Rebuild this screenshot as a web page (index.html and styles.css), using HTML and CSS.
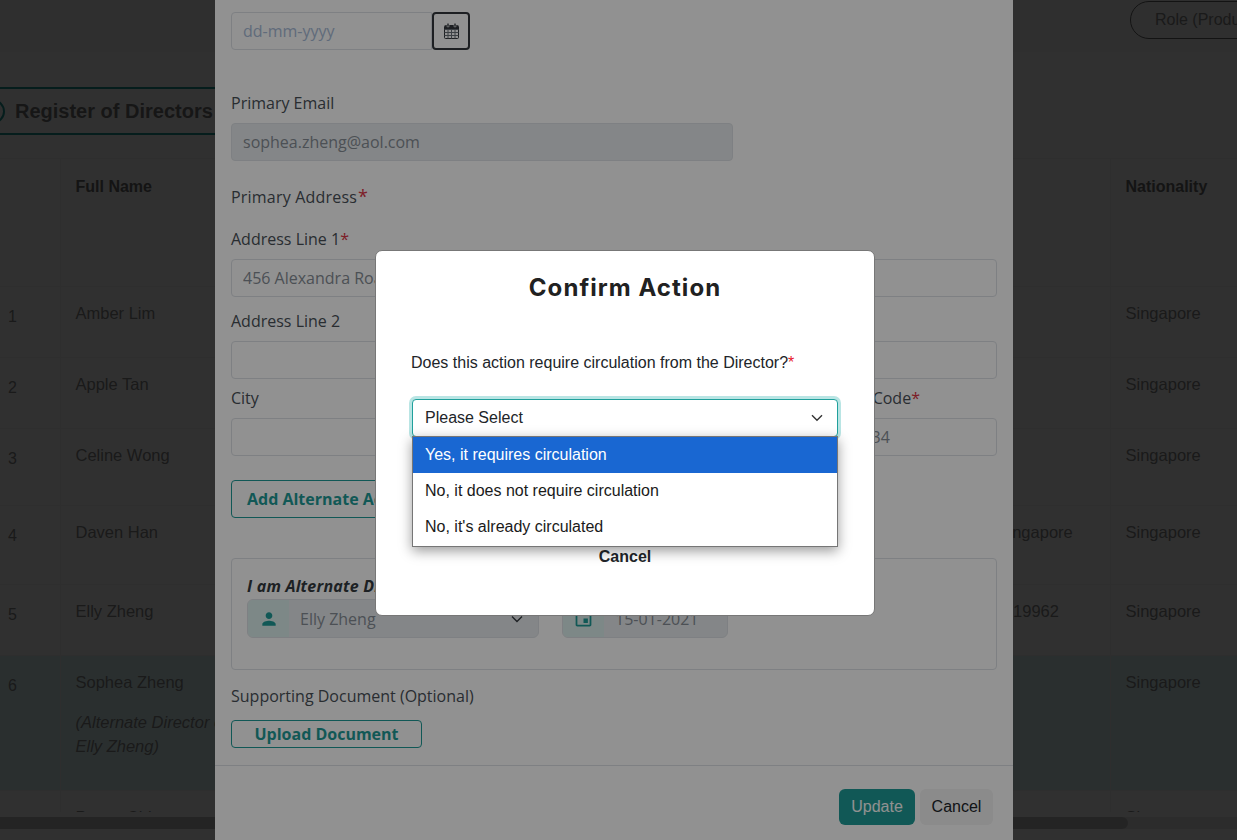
FILE: index.html
```html
<!DOCTYPE html>
<html lang="en">
<head>
<meta charset="utf-8">
<title>Register of Directors</title>
<link rel="stylesheet" href="styles.css">
</head>
<body>
<div class="page">
  <header class="topbar"><span class="role-pill">Role (Production)</span></header>
  <div class="section-pill"><span class="section-dot"></span><h1 class="section-title">Register of Directors</h1></div>
  <div class="table-wrap">
    <table class="directors">
      <colgroup><col class="c-num"><col class="c-name"><col class="c-mid"><col class="c-addr"><col class="c-nat"></colgroup>
      <thead><tr class="r-head"><th></th><th>Full Name</th><th></th><th></th><th>Nationality</th></tr></thead>
      <tbody>
        <tr class="r-71"><td class="num">1</td><td>Amber Lim</td><td></td><td></td><td>Singapore</td></tr>
        <tr class="r-71"><td class="num">2</td><td>Apple Tan</td><td></td><td></td><td>Singapore</td></tr>
        <tr class="r-77"><td class="num">3</td><td>Celine Wong</td><td></td><td></td><td>Singapore</td></tr>
        <tr class="r-79"><td class="num">4</td><td>Daven Han</td><td></td><td>Singapore</td><td>Singapore</td></tr>
        <tr class="r-71"><td class="num">5</td><td>Elly Zheng</td><td></td><td>S 19962</td><td>Singapore</td></tr>
        <tr class="r-135 selected"><td class="num">6</td><td>Sophea Zheng<p class="alt">(Alternate Director of Elly Zheng)</p></td><td></td><td></td><td>Singapore</td></tr>
        <tr class="r-71"><td class="num">7</td><td>Penny Chi</td><td></td><td></td><td>Singapore</td></tr>
      </tbody>
    </table>
  </div>
  <div class="hscroll"><div class="hscroll-thumb"></div></div>
</div>

<div class="backdrop backdrop-page"></div>

<section class="panel">
  <div class="panel-body">
    <div class="date-row">
      <input class="field date-field" type="text" placeholder="dd-mm-yyyy">
      <button class="cal-btn" type="button" aria-label="Open calendar">
        <svg width="15" height="16" viewBox="0 0 15 16"><g fill="none" stroke-width="1"><rect x=".5" y="2.500" width="14" height="13" rx="1" stroke="#33383d"/><path d="M.5 6.500h14M.5 9.500h14M.5 12.500h14M4 6.500v9M7.500 6.500v9M11 6.500v9" stroke="#6b7279"/></g><path fill="#33383d" d="M1 3h13v3H1z"/><path fill="#33383d" stroke="#fff" stroke-width=".6" d="M3 .3h2v3.500H3zM10 .3h2v3.500h-2z"/></svg>
      </button>
    </div>

    <label class="lbl lbl-email">Primary Email</label>
    <input class="field field-email" type="text" value="sophea.zheng@aol.com" disabled>

    <div class="lbl lbl-primary">Primary Address<span class="req req-big">*</span></div>
    <label class="lbl lbl-line1">Address Line 1<span class="req">*</span></label>
    <input class="field" type="text" value="456 Alexandra Road">
    <label class="lbl lbl-line2">Address Line 2</label>
    <input class="field" type="text">

    <div class="city-row">
      <div class="city-col">
        <label class="lbl">City</label>
        <input class="field" type="text">
      </div>
      <div class="postal-col">
        <label class="lbl">Postal Code<span class="req">*</span></label>
        <input class="field" type="text" value="123434">
      </div>
    </div>

    <button class="btn-outline btn-alt" type="button">Add Alternate Address</button>

    <div class="alt-box">
      <div class="alt-title">I am Alternate Director of</div>
      <div class="alt-fields">
        <div class="group group-person">
          <span class="group-icon"><svg width="20" height="20" viewBox="0 0 24 24"><path fill="#1e9c97" d="M12 12c2.210 0 4-1.790 4-4s-1.790-4-4-4-4 1.790-4 4 1.790 4 4 4zm0 2c-2.670 0-8 1.340-8 4v2h16v-2c0-2.660-5.330-4-8-4z"/></svg></span>
          <span class="group-value">Elly Zheng</span>
          <svg class="group-chev" width="12" height="12" viewBox="0 0 12 12"><path fill="none" stroke="#343a40" stroke-width="1.400" d="M1 3.500 6 8.500l5-5"/></svg>
        </div>
        <div class="group group-date">
          <span class="group-icon"><svg width="21" height="21" viewBox="0 0 24 24"><path fill="#1e9c97" d="M17 12h-5v5h5v-5zM16 1v2H8V1H6v2H5c-1.110 0-1.990.9-1.990 2L3 19c0 1.100.89 2 2 2h14c1.100 0 2-.9 2-2V5c0-1.100-.9-2-2-2h-1V1h-2zm3 18H5V8h14v11z"/></svg></span>
          <span class="group-value">15-01-2021</span>
        </div>
      </div>
    </div>

    <div class="lbl lbl-support">Supporting Document (Optional)</div>
    <button class="btn-outline btn-upload" type="button">Upload Document</button>
  </div>
  <footer class="panel-foot">
    <button class="btn-update" type="button">Update</button>
    <button class="btn-cancel" type="button">Cancel</button>
  </footer>
</section>

<div class="backdrop backdrop-panel"></div>

<div class="dialog-layer">
  <div class="dialog" role="dialog" aria-modal="true">
    <h2 class="dialog-title">Confirm Action</h2>
    <p class="dialog-question">Does this action require circulation from the Director?<span class="req-bright">*</span></p>
    <div class="select-wrap">
      <div class="select-box">
        <span>Please Select</span>
        <svg width="12" height="8" viewBox="0 0 12 8"><path fill="none" stroke="#333" stroke-width="1.400" d="M1 1.300 6 6.300l5-5"/></svg>
      </div>
      <ul class="select-menu">
        <li class="active">Yes, it requires circulation</li>
        <li>No, it does not require circulation</li>
        <li>No, it's already circulated</li>
      </ul>
    </div>
    <div class="dialog-cancel">Cancel</div>
  </div>
</div>
</body>
</html>
```

FILE: styles.css
```css
* { box-sizing: border-box; }
html, body { margin: 0; padding: 0; height: 100%; overflow: hidden; }
body { font-family: "Liberation Sans", Arial, sans-serif; font-size: 16px; line-height: 24px; color: #212529; background: #fff; }

/* page underneath */
.page { height: 840px; overflow: hidden; display: flex; flex-direction: column; background: #fff; color: #8a8a8a; }
.topbar { height: 52px; flex: none; padding: 1px 0 0 1130px; background: #f9f9f9; white-space: nowrap; }
.role-pill { display: inline-block; height: 38px; line-height: 36px; padding: 0 24px; border: 1px solid #666; border-radius: 19px; }
.section-pill { flex: none; margin: 35px 0 0 -20px; width: 300px; height: 48px; display: flex; align-items: center; gap: 10px; border: solid #1e9c97; border-width: 2px 0; }
.section-dot { width: 25px; height: 25px; border-radius: 50%; border: 2px solid #1e9c97; flex: none; }
.section-title { margin: 0; font-size: 20px; font-weight: 700; color: #777; white-space: nowrap; }

.table-wrap { flex: none; margin-top: 23px; height: 654px; overflow: hidden; }
.directors { border-collapse: collapse; table-layout: fixed; width: 1380px; }
.c-num { width: 60px; } .c-name { width: 190px; } .c-mid { width: 732px; } .c-addr { width: 128px; } .c-nat { width: 270px; }
.directors th, .directors td { padding: 14px 15px 15px; vertical-align: top; text-align: left; font-size: 16.5px; border-left: 1px solid #f2f2f2; border-top: 1px solid #f2f2f2; }
.directors th { font-size: 16px; font-weight: 700; color: #6a6a6a; padding-top: 16px; }
.directors th:first-child, .directors td:first-child { border-left: 0; padding-left: 8px; }
.directors td.num { padding-top: 18px; font-size: 16px; }
.r-head { height: 128px; }
.r-71 { height: 71px; } .r-77 { height: 77px; } .r-79 { height: 79px; } .r-135 { height: 135px; }
.selected td { background: #dffafa; }
.alt { margin: 16px 0 0; font-style: italic; }
.hscroll { flex: none; margin-top: 5px; height: 12px; background: #e6e6e6; }
.hscroll-thumb { width: 1128px; height: 12px; background: #c0c0c0; border-radius: 0 6px 6px 0; }

/* backdrops */
.backdrop { position: fixed; inset: 0; background: #000; }
.backdrop-page { opacity: .67; }
.backdrop-panel { opacity: .43; }

/* form panel */
.panel { position: fixed; left: 215px; top: 0; width: 798px; height: 840px; background: #fff; font-family: "Open Sans", sans-serif; color: #495057; display: flex; flex-direction: column; overflow: hidden; }
.panel-body { flex: none; height: 765px; padding: 12px 16px 0; }
.lbl { display: block; line-height: 24px; color: #495057; }
.req { color: #dc3545; }
.req-big { margin-left: 1px; font-size: 18px; line-height: 0; }
.field { display: block; width: 100%; height: 38px; padding: 0 11px; border: 1px solid #dee2e6; border-radius: 4px; background: #fff; font: 16px/24px "Open Sans", sans-serif; color: #868e96; outline: 0; }
.field::placeholder { color: #a9bcd8; opacity: 1; }
.field:disabled { background: #e9ecef; }
.date-row { display: flex; }
.date-field { width: 201px; border-radius: 4px 0 0 4px; }
.cal-btn { width: 38px; height: 38px; padding: 0; display: flex; align-items: center; justify-content: center; background: #fff; border: 2px solid #33383d; border-radius: 4px; }
.lbl-email { margin: 41px 0 8px; }
.field-email { width: 502px; }
.lbl-primary { margin: 24px 0 18px; letter-spacing: .2px; }
.lbl-line1 { margin-bottom: 8px; }
.lbl-line2 { margin: 12px 0 8px; }
.city-row { display: flex; justify-content: space-between; margin-top: 7px; }
.city-col { width: 280px; }
.postal-col { width: 174px; }
.city-row .lbl { margin-bottom: 8px; }
.btn-outline { display: block; padding: 0; background: #fff; border: 1px solid #1e9c97; border-radius: 4px; font: 700 16px/24px "Open Sans", sans-serif; color: #1e9c97; }
.btn-alt { margin-top: 24px; height: 38px; width: 220px; padding-left: 15px; text-align: left; white-space: nowrap; }
.alt-box { margin-top: 40px; height: 112px; padding: 15px; border: 1px solid #dee2e6; border-radius: 4px; }
.alt-title { font-weight: 700; font-style: italic; color: #343a40; line-height: 24px; letter-spacing: .2px; }
.alt-fields { display: flex; gap: 23px; margin-top: 1px; }
.group { height: 39px; display: flex; align-items: center; background: #e9ecef; border: 1px solid #dee2e6; border-radius: 6px; overflow: hidden; }
.group-person { width: 292px; }
.group-date { width: 166px; }
.group-icon { width: 41px; height: 100%; flex: none; display: flex; align-items: center; justify-content: center; background: #dcefed; }
.group-value { margin-left: 11px; flex: 1; color: #868e96; }
.group-chev { margin-right: 15px; }
.lbl-support { margin: 14px 0 12px; }
.btn-upload { width: 191px; height: 28px; line-height: 26px; }
.panel-foot { flex: 1; display: flex; justify-content: flex-end; align-items: flex-start; gap: 5px; padding: 23px 20px 0 0; border-top: 1px solid #dee2e6; }
.btn-update, .btn-cancel { height: 36px; border: 0; border-radius: 6px; font: 16px/24px "Liberation Sans", sans-serif; padding: 0; }
.btn-update { width: 76px; background: #1e9c97; color: #fff; }
.btn-cancel { width: 73px; background: #f4f4f4; color: #212529; }

/* confirm dialog */
.dialog-layer { position: fixed; inset: 0; display: flex; justify-content: center; align-items: flex-start; padding-top: 250px; padding-left: 13px; }
.dialog { width: 500px; height: 366px; padding: 22px 36px 0; background: #fff; border: 1px solid #777; border-radius: 7px; color: #212529; }
.dialog-title { margin: 0; font: 700 24px/29px Inter, sans-serif; text-align: center; letter-spacing: 1.05px; color: #212121; }
.dialog-question { margin: 49px 0 24px -1px; line-height: 24px; color: #212529; }
.req-bright { color: #e8192c; }
.select-wrap { position: relative; }
.select-box { height: 38px; display: flex; align-items: center; justify-content: space-between; padding: 0 14px 0 12px; border: 1px solid #20a09c; border-radius: 4px; box-shadow: 0 0 0 3px #b9e5e4; background: #fff; color: #212529; }
.select-menu { position: absolute; left: 0; right: 0; top: 37px; margin: 0; padding: 0 0 1px; list-style: none; background: #fff; border: 1px solid #767676; box-shadow: 0 4px 12px rgba(0,0,0,.4); }
.select-menu li { height: 36px; line-height: 36px; padding-left: 12px; color: #1a1a1a; }
.select-menu li.active { background: #1967d2; color: #fff; }
.dialog-cancel { margin-top: 108px; text-align: center; font-weight: 700; color: #212529; }
```
